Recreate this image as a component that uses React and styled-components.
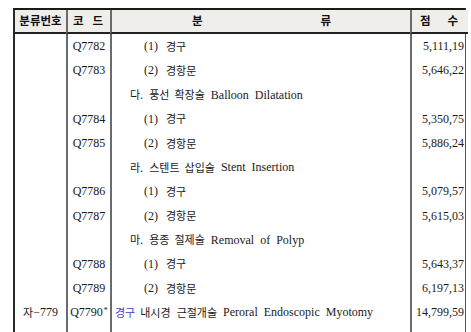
import React from 'react';
import styled, { createGlobalStyle } from 'styled-components';

const GlobalStyle = createGlobalStyle`
  html, body {
    margin: 0;
    padding: 0;
    background: #ffffff;
  }
  body {
    width: 471px;
    height: 332px;
    overflow: hidden;
  }
`;

const Page = styled.div`
  padding: 8px 0 0 13px;
`;

const Grid = styled.div`
  display: grid;
  grid-template-columns: 51px 44px 300px 58px;
  grid-auto-rows: 24.2px;
  width: 453px;
  border-top: 2px solid #1a1a1a;
  border-left: 2px solid #2a2a2a;
  border-right: 1px solid #555;
  box-sizing: border-box;
  font-family: 'Liberation Serif', 'Noto Sans CJK KR', serif;
  font-size: 12px;
  color: #1a1a1a;
`;

const Head = styled.div`
  height: 24px;
  grid-row: 1;
  background: #efeeea;
  border-bottom: 2px solid #222;
  border-left: ${({ $first }) => ($first ? 'none' : '2px solid #6b6b6b')};
  display: flex;
  align-items: center;
  justify-content: ${({ $spread }) => ($spread ? 'space-between' : 'center')};
  padding: ${({ $pad }) => $pad || '0'};
  font-family: 'Noto Sans CJK KR', 'Noto Sans', sans-serif;
  font-weight: 700;
  font-size: 11.5px;
  color: #111;
  box-sizing: border-box;
  line-height: 1;
`;

const Cell = styled.div`
  display: flex;
  align-items: center;
  justify-content: ${({ $align }) =>
    $align === 'right' ? 'flex-end' : $align === 'left' ? 'flex-start' : 'center'};
  padding-left: ${({ $indent }) => $indent || 0}px;
  padding-right: ${({ $align }) => ($align === 'right' ? '4px' : '0')};
  border-left: ${({ $first }) => ($first ? 'none' : '2px solid #6b6b6b')};
  white-space: pre;
  box-sizing: border-box;
  line-height: 1;
`;

const Ko = styled.span`
  font-family: 'Noto Sans CJK KR', sans-serif;
  font-size: 11px;
  color: ${({ $blue }) => ($blue ? '#4141bd' : 'inherit')};
  margin-left: ${({ $gap }) => $gap || 0}px;
`;

const Star = styled.sup`
  font-size: 8px;
  line-height: 0;
  margin-left: 1px;
  position: relative;
  top: -1px;
`;

const Line = ({ parts }) =>
  parts.map((p, i) =>
    typeof p === 'string' ? (
      <span key={i}>{p}</span>
    ) : (
      <Ko key={i} $gap={p.gap} $blue={p.blue}>
        {p.ko}
      </Ko>
    )
  );

const item = (n, ko) => [`(${n})`, { ko, gap: 8 }];

const rows = [
  { code: 'Q7782', parts: item(1, '경구'), indent: 32, score: '5,111,19' },
  { code: 'Q7783', parts: item(2, '경항문'), indent: 32, score: '5,646,22' },
  { parts: [{ ko: '다.' }, { ko: '풍선', gap: 6 }, { ko: '확장술', gap: 5 }, '  Balloon  Dilatation'], indent: 18 },
  { code: 'Q7784', parts: item(1, '경구'), indent: 32, score: '5,350,75' },
  { code: 'Q7785', parts: item(2, '경항문'), indent: 32, score: '5,886,24' },
  { parts: [{ ko: '라.' }, { ko: '스텐트', gap: 6 }, { ko: '삽입술', gap: 5 }, '  Stent  Insertion'], indent: 18 },
  { code: 'Q7786', parts: item(1, '경구'), indent: 32, score: '5,079,57' },
  { code: 'Q7787', parts: item(2, '경항문'), indent: 32, score: '5,615,03' },
  { parts: [{ ko: '마.' }, { ko: '용종', gap: 6 }, { ko: '절제술', gap: 5 }, '  Removal  of  Polyp'], indent: 18 },
  { code: 'Q7788', parts: item(1, '경구'), indent: 32, score: '5,643,37' },
  { code: 'Q7789', parts: item(2, '경항문'), indent: 32, score: '6,197,13' },
];

export default function App() {
  return (
    <>
      <GlobalStyle />
      <Page>
        <Grid>
          <Head $first>분류번호</Head>
          <Head $spread $pad="0 7px 0 5px">
            <span>코</span>
            <span>드</span>
          </Head>
          <Head $spread $pad="0 79px 0 80px">
            <span>분</span>
            <span>류</span>
          </Head>
          <Head $spread $pad="0 10px 0 8px">
            <span>점</span>
            <span>수</span>
          </Head>

          {rows.map((r, i) => (
            <React.Fragment key={i}>
              <Cell $first />
              <Cell>{r.code || ''}</Cell>
              <Cell $align="left" $indent={r.indent}>
                <Line parts={r.parts} />
              </Cell>
              <Cell $align="right">{r.score || ''}</Cell>
            </React.Fragment>
          ))}

          <Cell $first>
            <Ko>자</Ko>−779
          </Cell>
          <Cell>
            Q7790<Star>*</Star>
          </Cell>
          <Cell $align="left" $indent={3}>
            <Line
              parts={[
                { ko: '경구', blue: true },
                { ko: '내시경', gap: 5 },
                { ko: '근절개술', gap: 6 },
                '  Peroral  Endoscopic  Myotomy',
              ]}
            />
          </Cell>
          <Cell $align="right">14,799,59</Cell>

          <Cell $first />
          <Cell />
          <Cell />
          <Cell />
        </Grid>
      </Page>
    </>
  );
}
